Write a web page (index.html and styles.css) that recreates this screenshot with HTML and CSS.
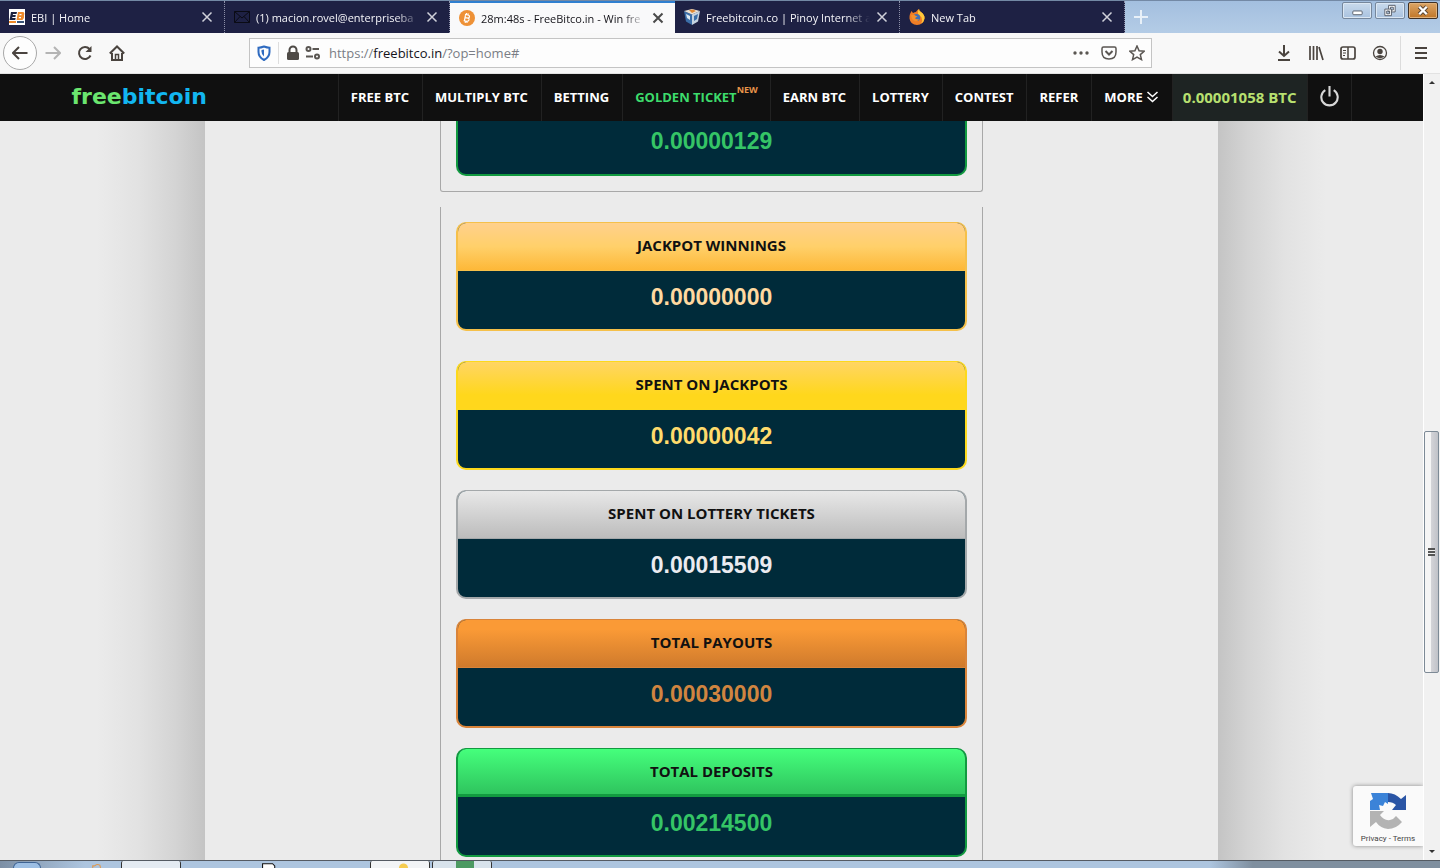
FILE: index.html
```html
<!DOCTYPE html>
<html lang="en">
<head>
    <meta charset="UTF-8">
    <meta name="viewport" content="width=device-width, initial-scale=1.0">
    <title>FreeBitco.in - Win free bitcoins every hour!</title>
    <link rel="stylesheet" href="styles.css">
</head>
<body>

<!-- Browser tabs -->
<div class="tab-strip">
    <div class="tab">
        <svg class="favicon" viewBox="0 0 16 16">
            <rect width="16" height="16" fill="#fff"/>
            <path d="M2 3h6l-.5 2H4l-.2 1h3l-.4 2h-3L3.200 9h3.500l-.5 2H.500z" fill="#1d2340"/>
            <path d="M9 3h5.500q1.500 1 .5 3.500q.6 2.500-1.500 4.500H7.500zM10.500 5l-.3 1.200h2.300V5zM10 8l-.3 1.200h2.300V8z" fill="#ee8a2a" fill-rule="evenodd"/>
            <path d="M0 12h7v2H0z" fill="#ee8a2a"/>
            <path d="M8 12h7v2H8z" fill="#3a5578"/>
        </svg>
        <span class="tab-title">EBI | Home</span>
        <button class="tab-close" aria-label="Close tab"><svg viewBox="0 0 12 12"><path d="M1.500 1.500l9 9M10.500 1.500l-9 9"/></svg></button>
    </div>
    <div class="tab">
        <svg class="favicon" viewBox="0 0 16 16" fill="none" stroke="#0a0b14">
            <path d="M.5 2.500h15v11H.5zM.5 2.500L8 9l7.500-6.500M.5 13.500l5.500-6M15.500 13.500l-5.500-6"/>
        </svg>
        <span class="tab-title">(1) macion.rovel@enterpriseba</span>
        <button class="tab-close" aria-label="Close tab"><svg viewBox="0 0 12 12"><path d="M1.500 1.500l9 9M10.500 1.500l-9 9"/></svg></button>
    </div>
    <div class="tab active">
        <svg class="favicon" viewBox="0 0 16 16">
            <circle cx="8" cy="8" r="8" fill="#ee9136"/>
            <path d="M6 4.500l3 .5q2 .6 1.300 2.200q-.3.8-1.300.8q1.500.6 1 2q-.7 1.700-3 1.200l-2.300-.5M6.600 4.700L5.400 10.800M6.200 7.700L9 8.200M7.500 3l-.3 1.800M9.200 3.400l-.3 1.600M6.500 11l-.3 1.800M8.200 11.300l-.3 1.700" fill="none" stroke="#fff" stroke-width="1.200"/>
        </svg>
        <span class="tab-title">28m:48s - FreeBitco.in - Win fre</span>
        <button class="tab-close" aria-label="Close tab"><svg viewBox="0 0 12 12"><path d="M1.500 1.500l9 9M10.500 1.500l-9 9"/></svg></button>
    </div>
    <div class="tab">
        <svg class="favicon" viewBox="0 0 16 16">
            <path d="M0 2l8 3.500V16l-6-3.500z" fill="#3b6ea8"/>
            <path d="M16 2L8 5.500V16l6-3.500z" fill="#c5d3e0"/>
            <path d="M0 2l8-2 8 2-8 3.500z" fill="#e8e2d8"/>
            <path d="M5 1l4-.5L12 2 8 4z" fill="#e08a35"/>
            <path d="M2 5l4 2v4l-3-2z" fill="#dce8f2"/>
            <path d="M10 7l4-2-1 5-3 2z" fill="#3b6ea8"/>
        </svg>
        <span class="tab-title">Freebitcoin.co | Pinoy Internet a</span>
        <button class="tab-close" aria-label="Close tab"><svg viewBox="0 0 12 12"><path d="M1.500 1.500l9 9M10.500 1.500l-9 9"/></svg></button>
    </div>
    <div class="tab">
        <svg class="favicon" viewBox="0 0 16 16">
            <path d="M1 5l1.500-3L4 4q2-1 3-1 1-2 3-3 0 2 2 3 4 3 3.500 6.500Q14.500 16 8 16T.5 9.500Q.3 7 1 5z" fill="#ef7d26"/>
            <path d="M10 0q0 2 2 3 4 3 3.500 6.500-.5 3.500-3.500 5 2-3 .5-6Q11 6 9 5q-1-3 1-5z" fill="#ffca3a"/>
            <circle cx="7.500" cy="8.500" r="3.600" fill="#3f70b5"/>
            <path d="M2 6q3-1 5 1l1.500.5L6 9q1 2 4 1-1.500 3-4.500 2T2 6z" fill="#f5912c"/>
        </svg>
        <span class="tab-title">New Tab</span>
        <button class="tab-close" aria-label="Close tab"><svg viewBox="0 0 12 12"><path d="M1.500 1.500l9 9M10.500 1.500l-9 9"/></svg></button>
    </div>
    <button class="new-tab" aria-label="New tab"><svg viewBox="0 0 14 14"><path d="M7 0v14M0 7h14"/></svg></button>
    <div class="window-buttons">
        <button aria-label="Minimize"><svg viewBox="0 0 28 16"><rect x="9.500" y="8.500" width="10" height="4" rx="1" fill="#fff" stroke="#555c68"/></svg></button>
        <button aria-label="Restore"><svg viewBox="0 0 28 16" fill="#fff" stroke="#555c68"><path d="M12.500 2.500h7v7h-7zM14.500 4.500h3v3h-3z" fill-rule="evenodd"/><path d="M8.500 6.500h7v7h-7zM10.500 8.500h3v3h-3z" fill-rule="evenodd"/></svg></button>
        <button class="close-window" aria-label="Close"><svg viewBox="0 0 28 16"><path d="M10 4l8 8M18 4l-8 8" stroke="#5a4634" stroke-width="4.500"/><path d="M10 4l8 8M18 4l-8 8" stroke="#fff" stroke-width="2.500"/></svg></button>
    </div>
</div>

<!-- Browser toolbar -->
<div class="toolbar">
    <button class="back" aria-label="Back"><svg viewBox="0 0 16 16"><path d="M15.500 8H1.500M7 2L1 8l6 6"/></svg></button>
    <button class="tool disabled" aria-label="Forward"><svg viewBox="0 0 16 16"><path d="M.5 8h14M9 2l6 6-6 6"/></svg></button>
    <button class="tool" aria-label="Reload"><svg viewBox="0 0 16 16"><path d="M13.500 10.500A6 6 0 1 1 12.500 4"/><path d="M14.500 1v6h-6z" fill="#4a443f" stroke="none"/></svg></button>
    <button class="tool" aria-label="Home"><svg viewBox="0 0 16 16"><path d="M.8 8.500L8 1.500l7.200 7M3 8v7h10V8"/><path d="M6.500 15V9.500h3V15" stroke-width="1.500"/></svg></button>

    <div class="url-bar">
        <svg class="shield" viewBox="0 0 16 16" fill="none" stroke="#2f6bc0" stroke-width="2"><path d="M8 1.500q3 1.200 5.500 1.200V7q0 5-5.500 8Q2.500 12 2.500 7V2.700Q5 2.700 8 1.500z"/><path d="M8 4.500v7q-2.500-2-2.500-5V5z" fill="#2f6bc0" stroke="none"/></svg>
        <span class="url-divider"></span>
        <svg viewBox="0 0 16 16"><rect x="2" y="7" width="12" height="8" rx="1.500" fill="#4e4a46"/><path d="M4.500 7V5a3.500 3.500 0 0 1 7 0v2" fill="none" stroke="#4e4a46" stroke-width="2"/></svg>
        <svg viewBox="0 0 16 16" fill="none" stroke="#5a5652" stroke-width="2"><circle cx="3.500" cy="4" r="2"/><path d="M7.500 4H14M1 11.500h7"/><circle cx="12" cy="11.500" r="2"/></svg>
        <a class="url" href="#">https://<b>freebitco.in</b>/?op=home#</a>
        <svg viewBox="0 0 16 16" fill="#5a5652"><circle cx="2" cy="8" r="1.700"/><circle cx="8" cy="8" r="1.700"/><circle cx="14" cy="8" r="1.700"/></svg>
        <svg viewBox="0 0 16 16" fill="none" stroke="#5a5652" stroke-width="1.500"><path d="M2.500 2h11q1.500 0 1.500 1.500V7Q15 14 8 14T1 7V3.500Q1 2 2.500 2z"/><path d="M4.500 6L8 9.500 11.500 6" stroke-width="2"/></svg>
        <svg viewBox="0 0 16 16" fill="none" stroke="#5a5652" stroke-width="1.500"><path d="M8 1l2.100 4.700 5.100.5-3.900 3.400 1.200 5L8 12l-4.500 2.600 1.200-5L.8 6.200l5.100-.5z"/></svg>
    </div>

    <div class="tools-right">
        <button class="tool" aria-label="Downloads"><svg viewBox="0 0 16 16"><path d="M8 0v11M3 6.500L8 11l5-4.500M2 15h12"/></svg></button>
        <button class="tool" aria-label="Library"><svg viewBox="0 0 16 16"><path d="M2 1v14M5.500 1v14M9 1v14M11 2l4 13" stroke-width="1.700"/></svg></button>
        <button class="tool" aria-label="Sidebars"><svg viewBox="0 0 16 16"><rect x="1" y="2" width="14" height="12" rx="2" stroke-width="1.700"/><path d="M8 2v12" stroke-width="1.500"/><path d="M3 5.500h3M3 8h3M3 10.500h2" stroke-width="1"/></svg></button>
        <button class="tool" aria-label="Account"><svg viewBox="0 0 16 16"><circle cx="8" cy="8" r="6.500" stroke-width="1.300"/><circle cx="8" cy="6.500" r="2.700" fill="#4a443f" stroke="none"/><path d="M3.500 11.500q4.500-3 9 0Q8 15 3.500 11.500z" fill="#4a443f" stroke="none"/></svg></button>
        <span class="tool-divider"></span>
        <button class="tool" aria-label="Menu"><svg viewBox="0 0 16 16"><path d="M2 3h12M2 8h12M2 13h12"/></svg></button>
    </div>
</div>

<div class="viewport">
    <div class="page">
        <!-- Site navigation -->
        <header>
            <nav>
                <a class="logo" href="#">free<span>bitcoin</span></a>
                <ul>
                    <li><a href="#">FREE BTC</a></li>
                    <li><a href="#">MULTIPLY BTC</a></li>
                    <li><a href="#">BETTING</a></li>
                    <li><a class="golden" href="#">GOLDEN TICKET<sup>NEW</sup></a></li>
                    <li><a href="#">EARN BTC</a></li>
                    <li><a href="#">LOTTERY</a></li>
                    <li><a href="#">CONTEST</a></li>
                    <li><a href="#">REFER</a></li>
                    <li><a href="#">MORE <svg class="chevrons" viewBox="0 0 12 12"><path d="M1 1l5 4.500L11 1M1 6l5 4.500L11 6"/></svg></a></li>
                    <li class="balance"><a href="#">0.00001058 BTC</a></li>
                    <li class="power"><a href="#" aria-label="Log out"><svg viewBox="0 0 18 20"><path d="M5 4a7.800 7.800 0 1 0 8 0M9 0v10"/></svg></a></li>
                </ul>
            </nav>
        </header>

        <!-- Account stats -->
        <main>
            <div class="content">
                <section class="group group-end">
                    <div class="card green cut">
                        <p>0.00000129</p>
                    </div>
                </section>
                <section class="group spaced">
                    <div class="card gold">
                        <h3>JACKPOT WINNINGS</h3>
                        <p>0.00000000</p>
                    </div>
                </section>
                <section class="group spaced">
                    <div class="card yellow">
                        <h3>SPENT ON JACKPOTS</h3>
                        <p>0.00000042</p>
                    </div>
                </section>
                <section class="group">
                    <div class="card silver">
                        <h3>SPENT ON LOTTERY TICKETS</h3>
                        <p>0.00015509</p>
                    </div>
                </section>
                <section class="group">
                    <div class="card orange">
                        <h3>TOTAL PAYOUTS</h3>
                        <p>0.00030000</p>
                    </div>
                </section>
                <section class="group">
                    <div class="card green">
                        <h3>TOTAL DEPOSITS</h3>
                        <p>0.00214500</p>
                    </div>
                </section>
            </div>
        </main>

        <div class="recaptcha">
            <svg viewBox="0 0 40 40">
                <path d="M2 19V10L5 8 3 2h17v11l-3-2-2 4-4-1 1 5z" fill="#3b83d8"/>
                <path d="M20 2q7 0 13 6l5-4v15H24l4-5q-3-3-8-3z" fill="#2a55a5"/>
                <path d="M2 20h14l-4 4q4 6 10 5 4-1 6-4l6 6q-6 7-14 7-8-1-12-7l-6 5z" fill="#b3b3b3"/>
            </svg>
            <div><a href="#">Privacy</a> - <a href="#">Terms</a></div>
        </div>
    </div>

    <div class="scrollbar">
        <span class="arrow up"></span>
        <span class="thumb"></span>
        <span class="arrow down"></span>
    </div>
</div>

<!-- Top edge of the Windows taskbar -->
<div class="taskbar">
    <span class="start"></span>
    <svg class="task-orb" viewBox="0 0 16 7"><path d="M2 7V4h3M5 4q3-3 7-1l1 4" fill="none" stroke="#e09a50" stroke-width="1.500"/></svg>
    <span class="task task-1"></span>
    <svg class="task-doc" viewBox="0 0 20 7"><path d="M1 7V1h14l3 3v3" fill="#fff" stroke="#111" stroke-width="1.500"/></svg>
    <span class="task task-2"></span>
    <span class="task task-3"></span>
</div>

</body>
</html>
```

FILE: styles.css
```css
/* General */
* {
    box-sizing: border-box;
}

body {
    display: flex;
    flex-direction: column;
    height: 100vh;
    margin: 0;
    overflow: hidden;
    font-family: "Open Sans", sans-serif;
    background-color: #ebebeb;
}

button {
    padding: 0;
    border: none;
    background: none;
    cursor: pointer;
}

a {
    color: inherit;
    text-decoration: none;
}

svg {
    display: block;
    flex: none;
}

/* Tab strip */
.tab-strip {
    display: flex;
    flex: none;
    height: 33px;
    border-top: 1px solid #7389a5;
    background: linear-gradient(#a3bfdf, #b4cce6);
}

.tab {
    display: flex;
    align-items: center;
    flex: 0 1 225px;
    min-width: 0;
    padding: 0 10px 0 9px;
    border-right: 1px dotted #8d90a8;
    background-color: #1e2144;
    color: #f4f4f8;
    font-size: 11px;
}

.tab.active {
    border-top: 2px solid #2f7fd0;
    border-right: none;
    background-color: #f9f9fa;
    color: #15141a;
}

.favicon {
    width: 16px;
    height: 16px;
    margin-right: 6px;
}

.tab-title {
    flex: 1;
    overflow: hidden;
    white-space: nowrap;
    mask-image: linear-gradient(to left, transparent, #000 24px);
}

.tab-close {
    width: 12px;
    height: 12px;
    margin: 0 1px 0 6px;
}

.tab-close svg {
    width: 12px;
    fill: none;
    stroke: #d0d1da;
    stroke-width: 1.5;
}

.active .tab-close svg {
    stroke: #4a4a4a;
    stroke-width: 2;
}

.new-tab {
    margin-left: 9px;
}

.new-tab svg {
    width: 14px;
    stroke: #e8f0f8;
    stroke-width: 2;
}

.window-buttons {
    display: flex;
    gap: 3px;
    margin: 1px 2px 0 auto;
}

.window-buttons button {
    width: 30px;
    height: 17px;
    border: 1px solid #76879c;
    border-radius: 2px;
    background: linear-gradient(#c9daec, #a9c2df);
    box-shadow: inset 0 0 0 1px #dbe7f3;
}

.window-buttons svg {
    width: 28px;
    height: 15px;
}

.window-buttons .close-window {
    border-color: #3f3025;
    background: linear-gradient(#dca566, #c07628);
    box-shadow: inset 0 0 0 1px #e0b27c;
}

/* Toolbar */
.toolbar {
    display: flex;
    align-items: center;
    flex: none;
    height: 41px;
    padding: 0 3px;
    border-bottom: 1px solid #e2e2e2;
    background-color: #f8f8f8;
}

.toolbar svg {
    width: 16px;
    height: 16px;
}

.tool,
.back {
    display: grid;
    place-items: center;
    flex: none;
    width: 32px;
    height: 32px;
}

.tool svg,
.back svg {
    fill: none;
    stroke: #4a443f;
    stroke-width: 2;
}

.back {
    width: 34px;
    height: 34px;
    border: 1px solid #a8a8a8;
    border-radius: 50%;
    background-color: #fdfdfd;
}

.disabled svg {
    stroke: #b4b4b4;
}

.url-bar {
    display: flex;
    align-items: center;
    flex: 1;
    gap: 12px;
    height: 30px;
    margin-left: 116px;
    padding: 0 6px;
    border: 1px solid #c4c4c4;
    background-color: #fdfdfd;
}

.shield {
    margin-right: -6px;
}

.url-divider {
    width: 1px;
    height: 22px;
    margin-right: -6px;
    background-color: #dedede;
}

.url-bar .url-divider + svg {
    margin-right: -8px;
}

.url {
    flex: 1;
    margin-left: -4px;
    color: #7a7d85;
    font-size: 13px;
}

.url b {
    color: #15141a;
    font-weight: normal;
}

.tools-right {
    display: flex;
    align-items: center;
    margin-left: 116px;
}

.tool-divider {
    width: 1px;
    height: 34px;
    margin: 0 4px;
    background-color: #dcdcdc;
}

/* Visible part of the page and its scrollbar */
.viewport {
    display: flex;
    flex: 1;
    min-height: 0;
}

.page {
    position: relative;
    display: flex;
    flex-direction: column;
    flex: 1;
    overflow: hidden;
}

/* Site header */
header {
    flex: none;
    background-color: #101010;
    color: #fff;
}

nav {
    display: flex;
    justify-content: space-between;
    max-width: 1280px;
    height: 47px;
    margin: 0 auto;
}

.logo {
    align-self: center;
    padding-bottom: 2px;
    color: #6be66f;
    font-family: "DejaVu Sans", sans-serif;
    font-size: 22px;
    font-weight: bold;
}

.logo span {
    color: #12b6f0;
}

nav ul {
    display: flex;
    margin: 0;
    padding: 0;
    list-style: none;
    font-size: 13px;
    font-weight: 700;
}

nav li {
    border-left: 1px solid #222;
}

nav li a {
    display: flex;
    align-items: center;
    height: 100%;
    padding: 0 13px 2px 12px;
    white-space: nowrap;
}

nav li .golden {
    padding-right: 12px;
    color: #3ddc6c;
}

.golden sup {
    align-self: flex-start;
    margin-top: 10px;
    color: #e8944a;
    font-size: 9px;
    line-height: 12px;
}

.chevrons {
    width: 13px;
    height: 12px;
    margin-left: 3px;
    fill: none;
    stroke: #fff;
    stroke-width: 1.5;
}

.balance {
    background-color: #1e2423;
    color: #b8e070;
    font-size: 15px;
}

.balance a {
    padding: 0 10px 2px;
}

.power {
    border-right: 1px solid #222;
}

.power a {
    padding: 0 12px 2px;
}

.power svg {
    width: 19px;
    height: 21px;
    fill: none;
    stroke: #d8d8d8;
    stroke-width: 2;
}

/* Content column with soft shadows on both sides */
main {
    display: grid;
    grid-template-columns: 1fr minmax(0, 1013px) 1fr;
    flex: 1;
    min-height: 0;
}

main::before,
main::after {
    content: "";
    background: linear-gradient(to left, #c4c4c4, #d4d4d4 30px, #e2e2e2 66px, #ebebeb 108px);
}

main::after {
    background: linear-gradient(to right, #c4c4c4, #d4d4d4 30px, #e2e2e2 66px, #ebebeb 108px);
}

.content {
    min-height: 0;
    padding: 0 15px;
}

.group {
    max-width: 543px;
    margin: 0 auto;
    padding: 5px 15px 15px;
    border: 1px solid #a8a8a8;
    border-width: 0 1px;
}

.spaced {
    padding-top: 15px;
}

.group-end {
    margin-bottom: 15px;
    padding-top: 0;
    border-bottom-width: 1px;
    border-radius: 0 0 3px 3px;
}

/* Stat cards */
.card {
    overflow: hidden;
    border: 2px solid;
    border-top-width: 1px;
    border-radius: 10px;
    background-color: #002b3a;
    text-align: center;
}

.card h3 {
    margin: 0;
    padding-bottom: 2px;
    border-bottom: 1px solid;
    color: #111;
    font-size: 15px;
    font-weight: 700;
    line-height: 45px;
}

.card p {
    margin: 0;
    padding-bottom: 6px;
    font-family: "Liberation Sans", Arial, sans-serif;
    font-size: 23px;
    font-weight: bold;
    line-height: 52px;
}

.cut {
    border-top: none;
    border-radius: 0 0 10px 10px;
}

.cut p {
    padding-bottom: 13px;
    line-height: 40px;
}

.green,
.green h3 {
    border-color: #129a40;
}

.green h3 {
    padding-bottom: 0;
    border-bottom-width: 3px;
    background: linear-gradient(#45ff7c, #2fc45e);
}

.green p {
    color: #35c566;
}

.gold,
.gold h3 {
    border-color: #f5c04a;
}

.gold h3 {
    background: linear-gradient(#ffd08c, #ffd06a 50%, #fdb838);
}

.gold p {
    color: #ffd9a0;
}

.yellow,
.yellow h3 {
    border-color: #fcd91c;
}

.yellow h3 {
    background: linear-gradient(#ffd564, #ffd71c 70%);
}

.yellow p {
    color: #ffdb6c;
}

.silver,
.silver h3 {
    border-color: #a4a8aa;
}

.silver h3 {
    background: linear-gradient(#e8e8e8, #bcbcbc);
}

.silver p {
    color: #ebebf0;
}

.orange,
.orange h3 {
    border-color: #d9843a;
}

.orange h3 {
    background: linear-gradient(#fa9a36 20%, #cf7a2c);
}

.orange p {
    color: #d08540;
}

/* reCAPTCHA badge */
.recaptcha {
    position: absolute;
    right: 0;
    bottom: 14px;
    display: flex;
    flex-direction: column;
    align-items: center;
    gap: 2px;
    width: 70px;
    height: 60px;
    padding-top: 5px;
    border-radius: 3px 0 0 3px;
    background-color: #fafafa;
    box-shadow: 0 0 4px #888;
    color: #444;
    font-family: Roboto, sans-serif;
    font-size: 8px;
    line-height: 12px;
}

.recaptcha svg {
    width: 40px;
    height: 40px;
}

/* Scrollbar */
.scrollbar {
    display: grid;
    grid-template-rows: 17px 340fr 242fr 170fr 17px;
    flex: none;
    width: 17px;
    padding: 0 1px 0 0;
    border-left: 1px solid #fff;
    background-color: #f1f1f1;
}

.thumb {
    display: grid;
    place-items: center;
    grid-row: 3;
    border: 1px solid #7d8a96;
    border-radius: 2px;
    background: linear-gradient(to right, #f5f5f5 45%, #d4d4d8 46%, #c0c2c8);
}

.thumb::before {
    content: "";
    width: 7px;
    height: 8px;
    background: repeating-linear-gradient(#555 0 2px, #eee 2px 3px);
}

.arrow {
    align-self: center;
    justify-self: center;
    width: 0;
    border: 3px solid transparent;
    border-top-width: 0;
    border-bottom-color: #333;
}

.arrow.down {
    grid-row: 5;
    border-top: 3px solid #333;
    border-bottom-width: 0;
}

/* Taskbar */
.taskbar {
    display: flex;
    align-items: flex-end;
    flex: none;
    height: 8px;
    overflow: hidden;
    border-top: 1px solid #555b63;
    background: linear-gradient(to right, #7c8fa5, #adc5df 85px, #adc5df 84%, #7f8f9f 87%);
}

.start {
    width: 28px;
    height: 6px;
    margin-left: 13px;
    border: 1px solid #3f6494;
    border-bottom: none;
    border-radius: 14px 14px 0 0;
    background-color: #9dbfe4;
}

.task-orb {
    width: 16px;
    height: 5px;
    margin-left: 48px;
}

.task {
    height: 7px;
    width: 60px;
    border: 1px solid #333;
    border-width: 0 1px;
    border-radius: 2px 2px 0 0;
    background-color: #e4ebf2;
}

.task-1 {
    margin-left: 16px;
}

.task-doc {
    width: 20px;
    height: 5px;
    margin: 0 91px 0 78px;
}

.task-2 {
    background: radial-gradient(circle at 56% 100%, #f5cc50 4px, transparent 5px) #f2f4f6;
}

.task-3 {
    margin-left: 2px;
    background: linear-gradient(to right, transparent 40%, #4c9a62 40% 70%, transparent 70%) #d8e3ec;
}
```
